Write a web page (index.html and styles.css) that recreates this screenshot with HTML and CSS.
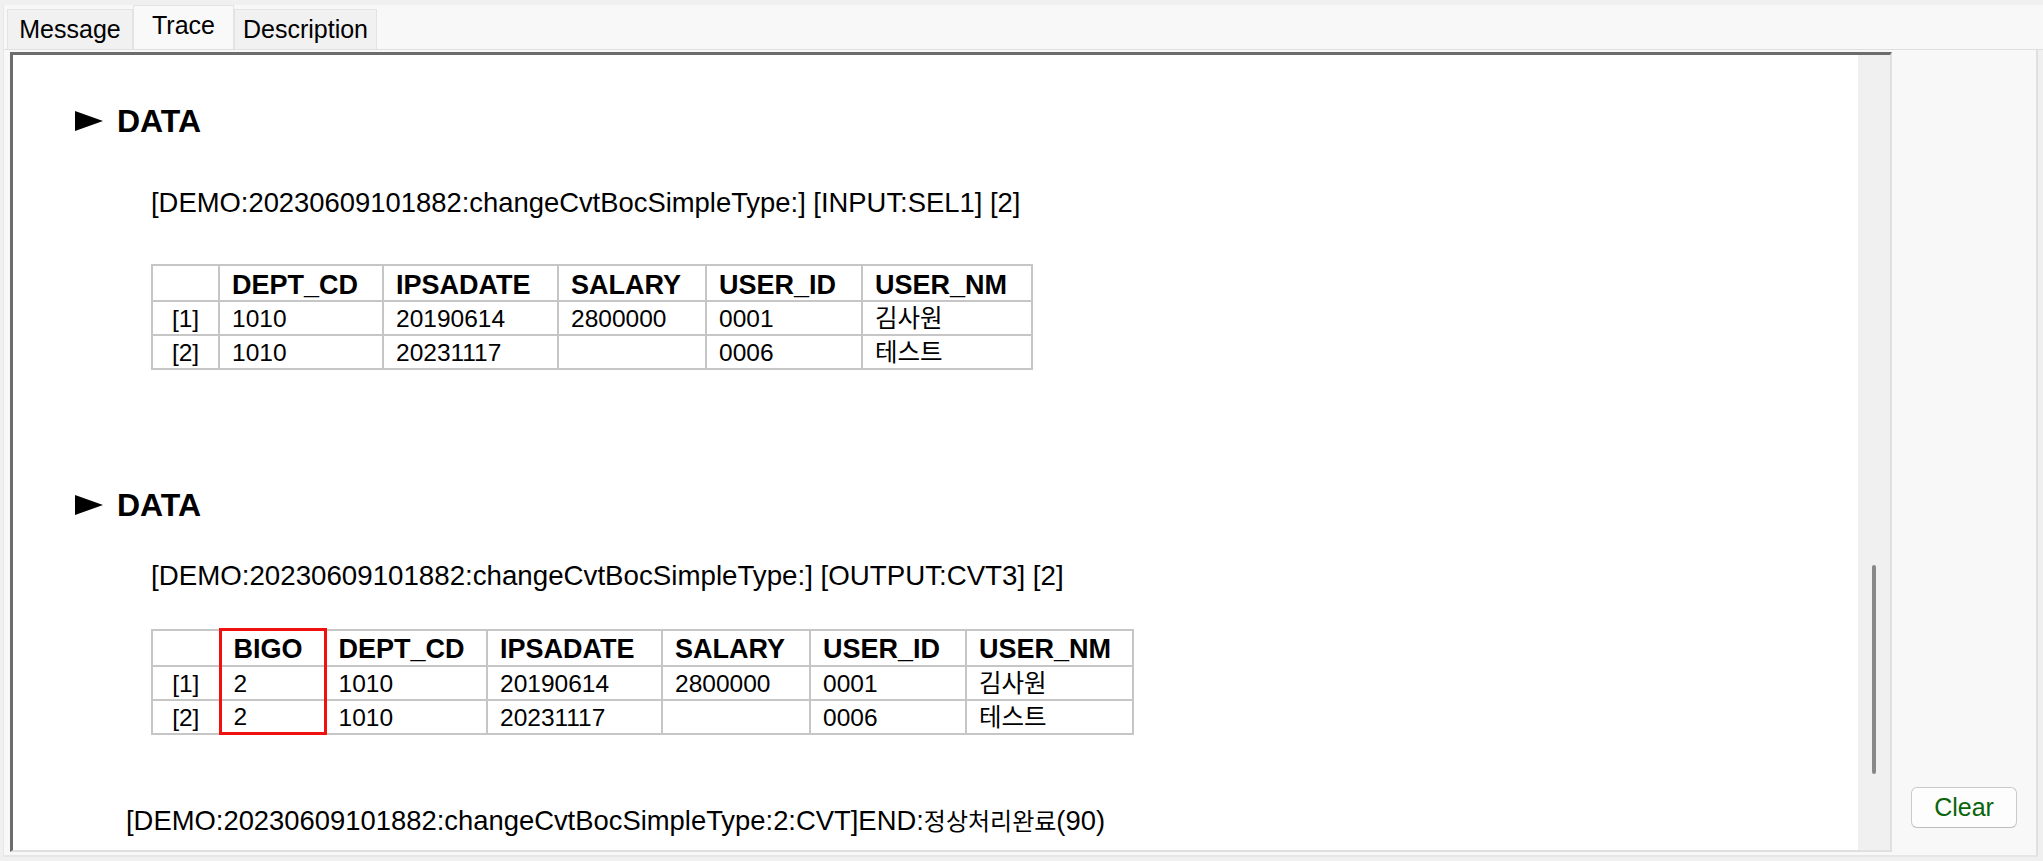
FILE: index.html
```html
<!DOCTYPE html>
<html lang="ko">
<head>
<meta charset="utf-8">
<title>Trace</title>
<link rel="stylesheet" href="styles.css">
</head>
<body>
<div class="app">
  <div class="tabs">
    <div class="tab tab-msg">Message</div>
    <div class="tab tab-trace active">Trace</div>
    <div class="tab tab-desc">Description</div>
  </div>
  <div class="main">
    <div class="trace-box">
      <div class="trace-content">
        <h2 class="data-head"><svg class="tri" width="28" height="20" viewBox="0 0 28 20"><polygon points="0,0 28,10 0,20" fill="#000"/></svg><span>DATA</span></h2>
        <p class="log log-sub">[DEMO:20230609101882:changeCvtBocSimpleType:] [INPUT:SEL1] [2]</p>
        <table class="grid grid-1">
          <colgroup>
            <col class="w-idx"><col class="w-dept"><col class="w-date"><col class="w-sal"><col class="w-uid"><col class="w-unm">
          </colgroup>
          <tr><th></th><th>DEPT_CD</th><th>IPSADATE</th><th>SALARY</th><th>USER_ID</th><th>USER_NM</th></tr>
          <tr><td class="idx">[1]</td><td>1010</td><td>20190614</td><td>2800000</td><td>0001</td><td>김사원</td></tr>
          <tr><td class="idx">[2]</td><td>1010</td><td>20231117</td><td></td><td>0006</td><td>테스트</td></tr>
        </table>
        <h2 class="data-head data-head-2"><svg class="tri" width="28" height="20" viewBox="0 0 28 20"><polygon points="0,0 28,10 0,20" fill="#000"/></svg><span>DATA</span></h2>
        <p class="log log-sub log-sub-2">[DEMO:20230609101882:changeCvtBocSimpleType:] [OUTPUT:CVT3] [2]</p>
        <table class="grid grid-2">
          <colgroup>
            <col class="w-idx2"><col class="w-bigo"><col class="w-dept2"><col class="w-date"><col class="w-sal"><col class="w-uid"><col class="w-unm2">
          </colgroup>
          <tr><th></th><th class="hl hl-top">BIGO</th><th>DEPT_CD</th><th>IPSADATE</th><th>SALARY</th><th>USER_ID</th><th>USER_NM</th></tr>
          <tr><td class="idx">[1]</td><td class="hl">2</td><td>1010</td><td>20190614</td><td>2800000</td><td>0001</td><td>김사원</td></tr>
          <tr><td class="idx">[2]</td><td class="hl hl-bottom">2</td><td>1010</td><td>20231117</td><td></td><td>0006</td><td>테스트</td></tr>
        </table>
        <p class="log log-end">[DEMO:20230609101882:changeCvtBocSimpleType:2:CVT]END:<span class="ko">정상처리완료</span>(90)</p>
      </div>
      <div class="scrollbar"><div class="thumb"></div></div>
    </div>
    <div class="side">
      <button class="clear-btn" type="button">Clear</button>
    </div>
  </div>
</div>
</body>
</html>
```

FILE: styles.css
```css
* { box-sizing: border-box; }
html, body { margin: 0; padding: 0; }
body {
  width: 2043px;
  height: 861px;
  overflow: hidden;
  background: #f0f0f0;
  font-family: "Liberation Sans", "Noto Sans CJK KR", sans-serif;
  color: #000;
}
.app {
  height: 861px;
  padding: 5px 0 4px 3px;
  display: flex;
  flex-direction: column;
}

/* tabs */
.tabs {
  height: 45px;
  flex: none;
  display: flex;
  align-items: flex-end;
  background: #f8f8f8;
  border-left: 1px solid #e8e8e8;
  border-bottom: 1px solid #e0e0e0;
  padding-left: 3px;
}
.tab {
  height: 40px;
  border: 1px solid #e3e3e3;
  border-bottom: none;
  background: #f1f1f1;
  font-size: 25px;
  display: flex;
  align-items: center;
  justify-content: center;
  color: #000;
}
.tab-msg { width: 126px; }
.tab-trace { width: 101px; }
.tab-desc { width: 143px; }
.tab.active {
  height: 44px;
  background: #f9f9f9;
  padding-bottom: 4px;
}

/* main area */
.main {
  flex: 1;
  min-height: 0;
  display: flex;
  background: #f8f8f8;
  border-left: 1px solid #e6e6e6;
  border-right: 2px solid #e0e0e0;
  border-bottom: 2px solid #e6e6e6;
  margin-right: 5px;
  padding: 2px 0 3px 6px;
}
.trace-box {
  width: 1882px;
  flex: none;
  display: flex;
  overflow: hidden;
  background: #fff;
  border-top: 3px solid #6c6c6c;
  border-left: 3px solid #6c6c6c;
  border-right: 2px solid #e0e0e0;
  border-bottom: 2px solid #e0e0e0;
}
.trace-content {
  flex: 1;
  min-height: 0;
  overflow: hidden;
}
.scrollbar {
  width: 32px;
  flex: none;
  background: #f0f0f0;
  padding-top: 510px;
  display: flex;
  justify-content: center;
  align-items: flex-start;
}
.thumb {
  width: 4px;
  height: 209px;
  background: #888;
  border-radius: 2px;
}

/* content */
.data-head {
  margin: 46px 0 0 62px;
  height: 40px;
  display: flex;
  align-items: center;
  gap: 14px;
  font-size: 32px;
  font-weight: bold;
  line-height: 40px;
}
.data-head-2 { margin-top: 115px; }
.tri { display: block; flex: none; }

.log {
  margin: 0;
  height: 36px;
  line-height: 36px;
  font-size: 27.4px;
  white-space: nowrap;
}
.log-sub { margin: 44px 0 0 138px; }
.log-sub-2 { margin-top: 33px; font-size: 27.7px; }
.log-end { margin: 68px 0 0 113px; }
.ko { font-size: 24px; }

.grid {
  margin: 43px 0 0 138px;
  border-collapse: collapse;
  table-layout: fixed;
}
.grid-1 { width: 880px; }
.grid-2 { width: 981px; margin-top: 34px; }
.w-idx { width: 67px; }
.w-idx2 { width: 68px; }
.w-bigo { width: 105px; }
.w-dept { width: 164px; }
.w-dept2 { width: 162px; }
.w-date { width: 175px; }
.w-sal { width: 148px; }
.w-uid { width: 156px; }
.w-unm { width: 170px; }
.w-unm2 { width: 167px; }

.grid th, .grid td {
  border: 2px solid #c6c6c6;
  padding: 0 0 0 12px;
  text-align: left;
  white-space: nowrap;
  overflow: hidden;
  line-height: 28px;
}
.grid th {
  height: 36px;
  font-size: 27px;
  font-weight: bold;
  padding-top: 3px;
}
.grid td {
  height: 34px;
  font-size: 24.5px;
  padding-top: 2px;
}
.grid td.idx {
  text-align: center;
  padding-left: 0;
}
.grid .hl {
  border-left: 3px solid #f01010;
  border-right: 3px solid #f01010;
}
.grid .hl-top { border-top: 3px solid #f01010; }
.grid .hl-bottom { border-bottom: 3px solid #f01010; }

/* side */
.side {
  flex: 1;
  display: flex;
  flex-direction: column;
  justify-content: flex-end;
  align-items: flex-start;
  padding: 0 0 24px 19px;
}
.clear-btn {
  width: 106px;
  height: 41px;
  border: 1px solid #cacaca;
  border-bottom-color: #bdbdbd;
  border-radius: 6px;
  background: #fdfdfd;
  color: #0a640a;
  font-family: "Liberation Sans", sans-serif;
  font-size: 25px;
  padding: 0;
  line-height: 39px;
}
```
